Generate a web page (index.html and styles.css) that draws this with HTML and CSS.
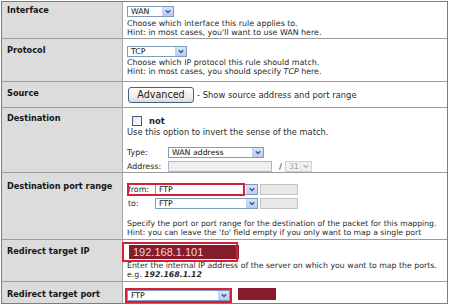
FILE: index.html
```html
<!DOCTYPE html>
<html>
<head>
<meta charset="utf-8">
<link rel="stylesheet" href="styles.css">
</head>
<body>
<div class="form">
  <div class="row row-iface">
    <div class="label">Interface</div>
    <div class="cell">
      <div class="sel sel-wan"><span class="val">WAN</span><span class="arr"><svg width="11" height="10" viewBox="0 0 11 10"><path d="M3 3.5 L5.5 6 L8 3.5" fill="none" stroke="#3d5a8c" stroke-width="1.6"/></svg></span></div>
      <p class="desc">Choose which interface this rule applies to.<br>Hint: in most cases, you'll want to use WAN here.</p>
    </div>
  </div>
  <div class="row row-proto">
    <div class="label">Protocol</div>
    <div class="cell">
      <div class="sel sel-tcp"><span class="val">TCP</span><span class="arr"><svg width="11" height="10" viewBox="0 0 11 10"><path d="M3 3.5 L5.5 6 L8 3.5" fill="none" stroke="#3d5a8c" stroke-width="1.6"/></svg></span></div>
      <p class="desc">Choose which IP protocol this rule should match.<br>Hint: in most cases, you should specify <i>TCP</i> here.</p>
    </div>
  </div>
  <div class="row row-src">
    <div class="label">Source</div>
    <div class="cell cell-inline">
      <span class="btn">Advanced</span><span class="desc-inline">- Show source address and port range</span>
    </div>
  </div>
  <div class="row row-dst">
    <div class="label">Destination</div>
    <div class="cell">
      <div class="check-line"><span class="check"></span><b class="not">not</b></div>
      <p class="desc">Use this option to invert the sense of the match.</p>
      <div class="field-line field-type">
        <span class="field-label">Type:</span>
        <div class="sel sel-type"><span class="val">WAN address</span><span class="arr"><svg width="11" height="10" viewBox="0 0 11 10"><path d="M3 3.5 L5.5 6 L8 3.5" fill="none" stroke="#3d5a8c" stroke-width="1.6"/></svg></span></div>
      </div>
      <div class="field-line field-addr">
        <span class="field-label">Address:</span>
        <span class="input input-addr"></span>
        <span class="slash">/</span>
        <div class="sel sel-mask disabled"><span class="val">31</span><span class="arr"><svg width="11" height="10" viewBox="0 0 11 10"><path d="M3 3.5 L5.5 6 L8 3.5" fill="none" stroke="#a9b4c6" stroke-width="1.4"/></svg></span></div>
      </div>
    </div>
  </div>
  <div class="row row-ports">
    <div class="label">Destination port range</div>
    <div class="cell">
      <div class="port-line port-from">
        <span class="port-label">from:</span>
        <div class="sel sel-port"><span class="val">FTP</span><span class="arr"><svg width="11" height="10" viewBox="0 0 11 10"><path d="M3 3.5 L5.5 6 L8 3.5" fill="none" stroke="#3d5a8c" stroke-width="1.6"/></svg></span></div>
        <span class="input input-port"></span>
      </div>
      <div class="port-line port-to">
        <span class="port-label">to:</span>
        <div class="sel sel-port"><span class="val">FTP</span><span class="arr"><svg width="11" height="10" viewBox="0 0 11 10"><path d="M3 3.5 L5.5 6 L8 3.5" fill="none" stroke="#3d5a8c" stroke-width="1.6"/></svg></span></div>
        <span class="input input-port"></span>
      </div>
      <p class="desc desc-ports">Specify the port or port range for the destination of the packet for this mapping.<br>Hint: you can leave the <i>'to'</i> field empty if you only want to map a single port</p>
      <span class="mark mark-from"></span>
    </div>
  </div>
  <div class="row row-rip">
    <div class="label">Redirect target IP</div>
    <div class="cell">
      <div class="ip-input">192.168.1.101</div>
      <p class="desc desc-ip">Enter the internal IP address of the server on which you want to map the ports.<br>e.g. <b><i>192.168.1.12</i></b></p>
      <span class="mark mark-ip"></span>
    </div>
  </div>
  <div class="row row-rport">
    <div class="label">Redirect target port</div>
    <div class="cell cell-rport">
      <div class="sel sel-rport"><span class="val">FTP</span><span class="arr"><svg width="11" height="10" viewBox="0 0 11 10"><path d="M3 3.5 L5.5 6 L8 3.5" fill="none" stroke="#3d5a8c" stroke-width="1.6"/></svg></span></div>
      <span class="redact"></span>
      <span class="mark mark-rport"></span>
    </div>
  </div>
</div>
</body>
</html>
```

FILE: styles.css
```css
* { box-sizing: border-box; }

body {
  margin: 0;
  background: #fff;
  font-family: "DejaVu Sans", Verdana, sans-serif;
  color: #1e1e1e;
}

.form {
  margin: 1px 0 0 1px;
  width: 447px;
  border: 1px solid #7c7c7c;
  overflow: hidden;
}

.row {
  display: flex;
  border-bottom: 1px solid #9c9c9c;
}
.row:last-child { border-bottom: 0; }

.label {
  width: 121px;
  flex: none;
  background: #dcdcdc;
  border-right: 1px solid #a6a6a6;
  font-weight: bold;
  font-size: 8.2px;
  line-height: 10px;
  padding: 3px 0 0 5px;
  color: #161616;
}

.cell {
  flex: 1;
  position: relative;
  padding: 4px 0 0 4px;
}

.desc {
  margin: 2px 0 0 0;
  font-size: 7.9px;
  line-height: 9px;
  color: #2a2a2a;
  white-space: nowrap;
}

/* rows */
.row-iface { height: 37px; }
.row-proto { height: 43px; }
.row-proto .label { padding-top: 6px; }
.row-proto .cell { padding-top: 7px; }
.row-proto .desc { margin-top: 1px; }

.row-src { height: 26px; }
.row-src .label { padding-top: 6px; }
.row-dst { height: 65px; }
.row-dst .label { padding-top: 5px; }
.row-dst .cell { padding-top: 8px; }
.row-ports { height: 67px; }
.row-ports .label { padding-top: 8px; }
.row-ports .cell { padding-top: 11px; }
.row-rip { height: 42px; }
.row-rip .label { padding-top: 6px; }
.row-rip .cell { padding-top: 5px; }
.row-rport { height: 21px; }
.row-rport .label { padding-top: 7px; }
.row-rport .cell { padding-top: 8px; }

/* select */
.sel {
  display: flex;
  height: 11px;
  border: 1px solid #7f9db9;
  background: #fff;
  font-size: 7.8px;
  line-height: 9px;
}
.sel .val { flex: 1; padding-left: 3px; color: #111; }
.sel .arr {
  width: 11px;
  height: 9px;
  flex: none;
  background: linear-gradient(#d9e4fb, #b7cbf3);
  border-left: 1px solid #c3d3f5;
}
.sel .arr svg { display: block; width: 10px; height: 9px; }
.sel.disabled { border-color: #c9d2dc; background: #f2f2f2; }
.sel.disabled .val { color: #999; }
.sel.disabled .arr { background: #eef1f6; border-left-color: #e2e6ee; }

.sel-wan { width: 47px; }
.sel-tcp { width: 60px; }

/* source */
.cell-inline {
  display: flex;
  align-items: center;
  padding-top: 0;
}
.btn {
  width: 66px;
  height: 16px;
  margin-left: 1px;
  border: 1px solid #40608a;
  border-radius: 3px;
  background: linear-gradient(#ffffff, #ecebe6 70%, #dcdad2);
  font-size: 9.6px;
  line-height: 14px;
  text-align: center;
  color: #222;
}
.desc-inline {
  margin-left: 3px;
  font-size: 8.4px;
  color: #2a2a2a;
  white-space: nowrap;
}

/* destination */
.check-line {
  display: flex;
  align-items: center;
  height: 10px;
}
.check {
  width: 10px;
  height: 10px;
  margin-left: 5px;
  border: 1px solid #3f5c86;
  background: linear-gradient(135deg, #e8e8e2, #fff);
}
.not {
  margin-left: 7px;
  font-size: 8.4px;
  line-height: 10px;
}
.row-dst .desc { margin-top: 2px; font-size: 8.3px; }

.field-line {
  display: flex;
  align-items: center;
  font-size: 7.9px;
  color: #2a2a2a;
}
.field-label { width: 41px; flex: none; }
.field-type { margin-top: 10px; }
.field-addr { margin-top: 3px; }
.sel-type { width: 96px; }
.input {
  display: block;
  height: 11px;
  border: 1px solid #aab8c8;
  background: #efefef;
}
.input-addr { width: 104px; }
.slash { margin: 0 3px 0 7px; font-weight: bold; color: #555; }
.sel-mask { width: 27px; }

/* ports */
.port-line {
  display: flex;
  align-items: center;
  font-size: 7.9px;
  color: #2a2a2a;
}
.port-to { margin-top: 3px; }
.port-label { width: 28px; flex: none; padding-left: 1px; }
.sel-port { width: 103px; }
.input-port { width: 38px; margin-left: 2px; border-color: #c4c4c4; background: #e9e9e9; }
.desc-ports { margin-top: 10px; font-size: 7.7px; }

.mark {
  position: absolute;
  border: 2px solid #d2213a;
}
.mark-from { left: 4px; top: 10px; width: 118px; height: 13px; }
.mark-ip { left: -1px; top: 2px; width: 116px; height: 20px; }
.mark-rport { left: 2px; top: 6px; width: 107px; height: 15px; }

/* redirect ip */
.ip-input {
  width: 110px;
  height: 14px;
  margin-left: 2px;
  background: #861b2b;
  color: #f1d6d8;
  font-family: "Liberation Sans", Arial, sans-serif;
  font-size: 11px;
  line-height: 14px;
  padding-left: 4px;
}
.desc-ip { margin-top: 2px; font-size: 7.8px; }

/* redirect port */
.cell-rport {
  display: flex;
  align-items: flex-start;
}
.sel-rport { width: 103px; }
.redact {
  display: block;
  width: 38px;
  height: 12px;
  margin-left: 8px;
  margin-top: -2px;
  background: #861b2b;
}
```
